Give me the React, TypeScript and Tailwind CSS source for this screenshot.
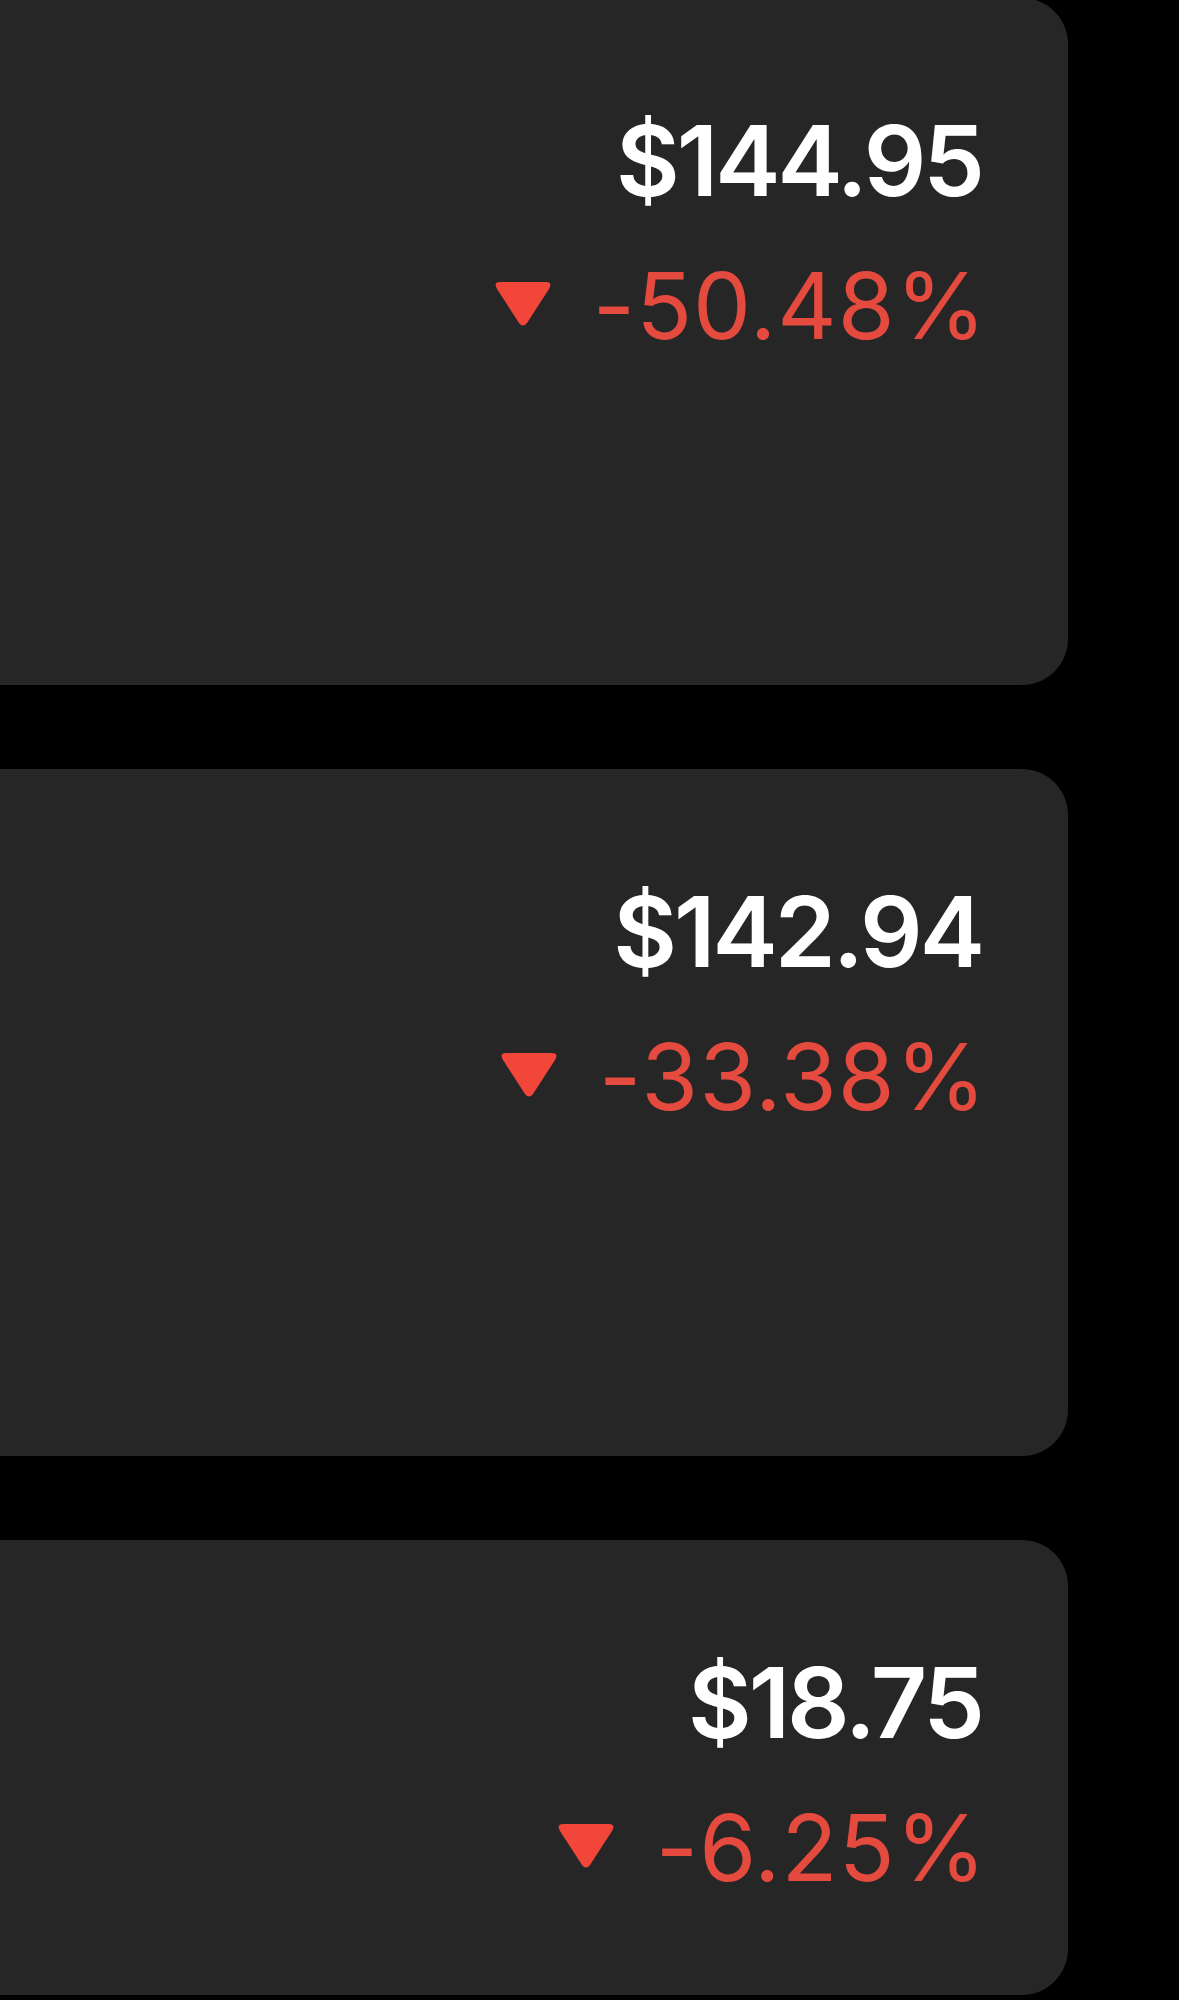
type Quote = {
  price: string;
  change: string;
  height: string;
};

const quotes: Quote[] = [
  { price: "$144.95", change: "-50.48%", height: "h-[687px]" },
  { price: "$142.94", change: "-33.38%", height: "h-[687px]" },
  { price: "$18.75", change: "-6.25%", height: "h-[455px]" },
];

export default function App() {
  return (
    <div className="min-h-[2000px] w-full overflow-hidden bg-black font-['Inter',sans-serif]">
      <div className="-mt-[2px] flex flex-col gap-[84px]">
        {quotes.map((q) => (
          <QuoteCard key={q.price} quote={q} />
        ))}
      </div>
    </div>
  );
}

function QuoteCard({ quote }: { quote: Quote }) {
  return (
    <div
      className={`${quote.height} w-[1068px] rounded-r-[46px] bg-[#262626] pr-[86px] pt-[114px]`}
    >
      <div className="flex flex-col items-end">
        <div className="text-[98px] font-semibold leading-none tracking-[-3px] text-white">
          {quote.price}
        </div>
        <div className="mt-[50px] flex items-center gap-[40px]">
          <DownTriangle />
          <span className="mr-[-5px] text-[92px] font-normal leading-none tracking-[1px] text-[#e54a3f]">
            {quote.change}
          </span>
        </div>
      </div>
    </div>
  );
}

function DownTriangle() {
  return (
    <svg width="60" height="48" viewBox="0 0 60 48" className="-mt-[4px]">
      <path
        d="M7 2 H53 Q60 2 56 9 L34 43 Q30 48 26 43 L4 9 Q0 2 7 2 Z"
        fill="#f2463a"
      />
    </svg>
  );
}
